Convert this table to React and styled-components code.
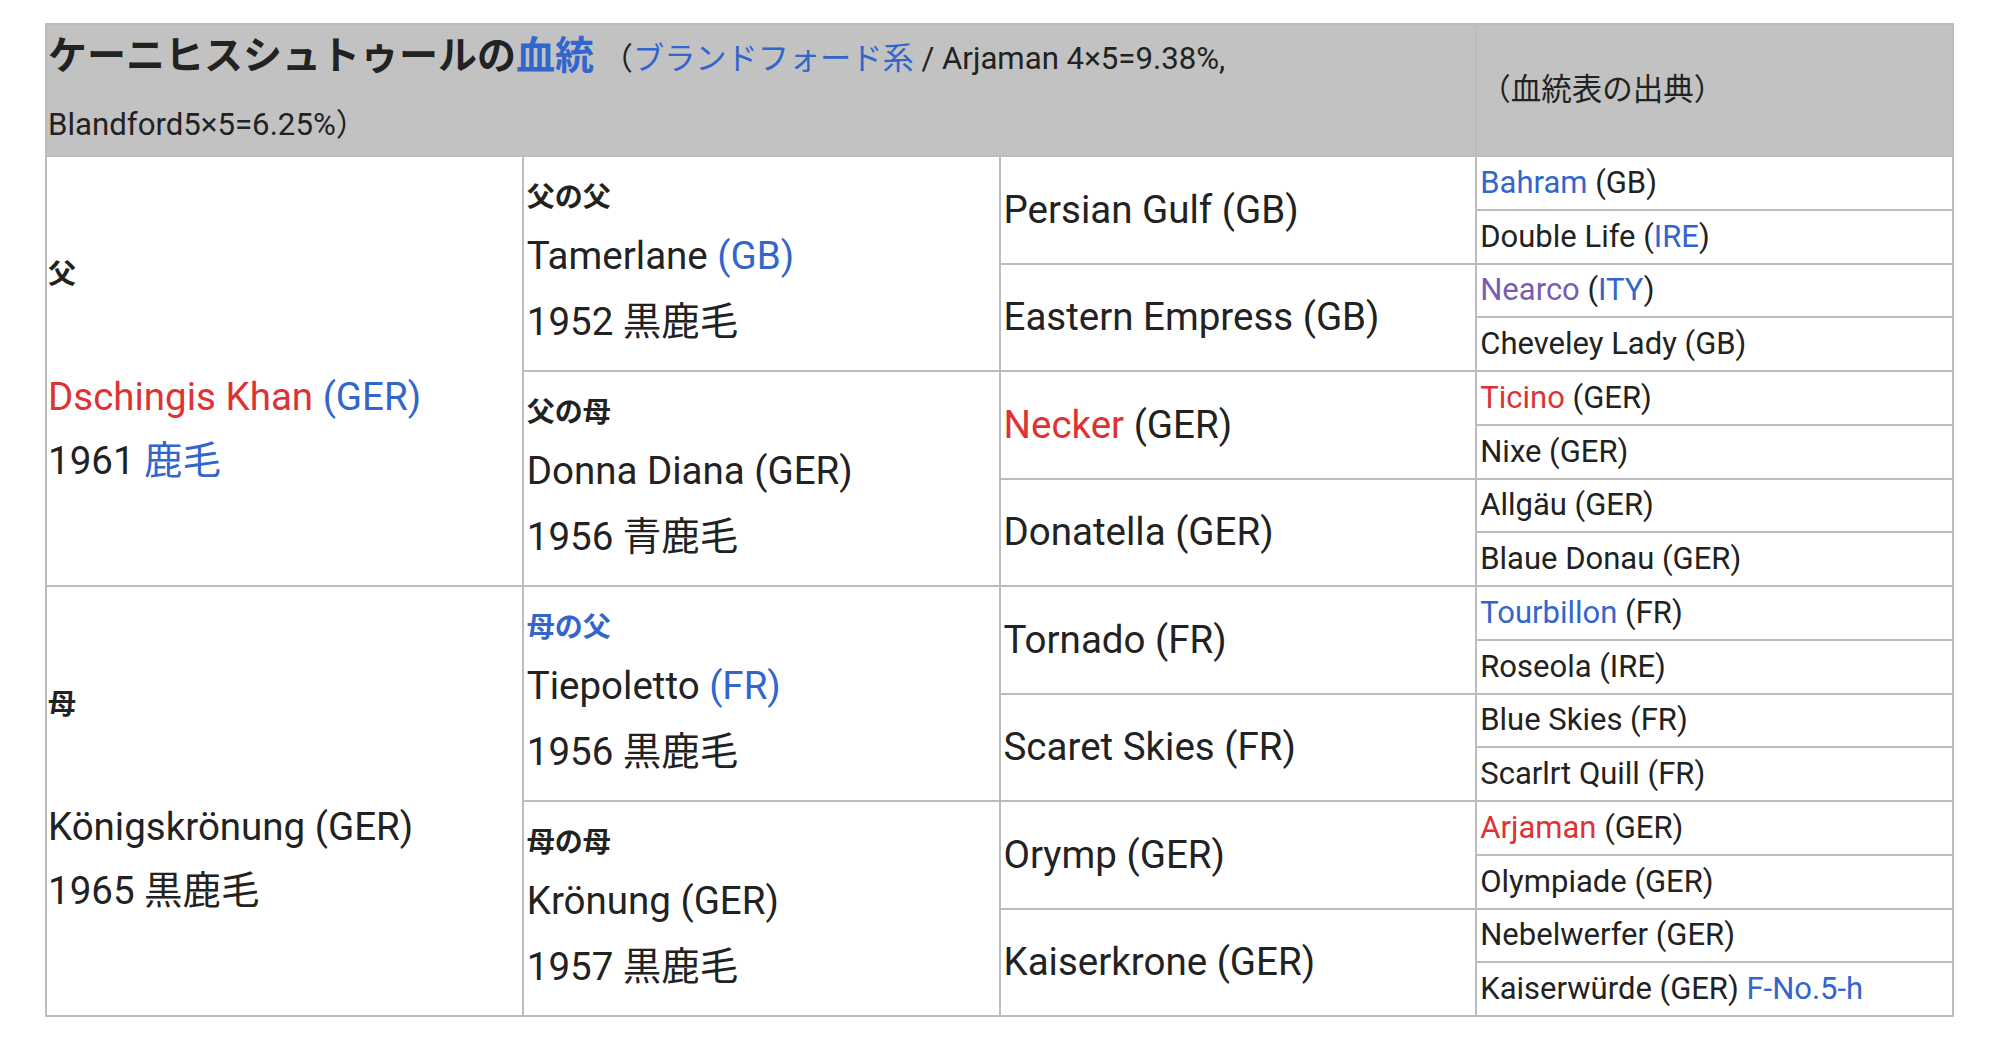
import styled, { createGlobalStyle } from "styled-components"

const GlobalStyle = createGlobalStyle`
    body {
        margin: 0;
        background: #ffffff;
        font-family: Roboto, "Noto Sans CJK JP", sans-serif;
        color: #222222;
    }
`

const Page = styled.div`
    padding: 23px 46px 35px 45px;
`

const Pedigree = styled.div`
    display: grid;
    grid-template-columns: repeat(4, 1fr);
    grid-template-rows: 130px repeat(16, 51.75px);
    gap: 2px;
    padding: 2px;
    background: #bcbcbc;
    width: 1909px;
    box-sizing: border-box;
`

const Cell = styled.div`
    grid-column: ${p => p.$col} / span ${p => p.$span || 1};
    grid-row: span ${p => p.$rows || 1};
    background: ${p => (p.$head ? "#c2c2c2" : "#ffffff")};
    display: flex;
    flex-direction: column;
    justify-content: center;
    padding-left: ${p => p.$pad || 3}px;
    font-size: ${p => p.$size || 38.5}px;
    line-height: ${p => p.$lh || 64}px;
    white-space: nowrap;
    overflow: hidden;
`

const Title = styled.span`
    font-size: 39px;
    font-weight: 700;
`

const HeadText = styled.div`
    font-size: 31.2px;
    line-height: 66px;
`

const Label = styled.div`
    font-size: 28px;
    font-weight: 700;
    line-height: ${p => p.$lh || 52}px;
    color: ${p => (p.$link ? "#3366cc" : "#222222")};
`

const Line = styled.div`
    height: 64px;
`

const Blue = styled.span`
    color: #3366cc;
`
const Red = styled.span`
    color: #dd3333;
`
const Visited = styled.span`
    color: #795cb2;
`

function Grand({ label, link, name, year }) {
    return (
        <Cell $col={2} $rows={4} $lh={66}>
            <Label $link={link} $lh={50}>{label}</Label>
            <div>{name}</div>
            <div>{year}</div>
        </Cell>
    )
}

function Great({ children }) {
    return (
        <Cell $col={3} $rows={2}>
            <div>{children}</div>
        </Cell>
    )
}

function Gen4({ children }) {
    return (
        <Cell $col={4} $size={31} $lh={40}>
            <div>{children}</div>
        </Cell>
    )
}

export default function App() {
    return (
        <Page>
            <GlobalStyle />
            <Pedigree>
                <Cell $col={1} $span={3} $head $pad={1}>
                    <HeadText>
                        <Title>ケーニヒスシュトゥールの<Blue>血統</Blue></Title> （<Blue>ブランドフォード系</Blue> / Arjaman 4×5=9.38%,
                        <br />
                        Blandford5×5=6.25%）
                    </HeadText>
                </Cell>
                <Cell $col={4} $head $size={30.5}>
                    <div>（血統表の出典）</div>
                </Cell>

                <Cell $col={1} $rows={8} $pad={1}>
                    <Label>父</Label>
                    <Line />
                    <div><Red>Dschingis Khan</Red> <Blue>(GER)</Blue></div>
                    <div>1961 <Blue>鹿毛</Blue></div>
                </Cell>
                <Grand label="父の父" name={<>Tamerlane <Blue>(GB)</Blue></>} year="1952 黒鹿毛" />
                <Great>Persian Gulf (GB)</Great>
                <Gen4><Blue>Bahram</Blue> (GB)</Gen4>
                <Gen4>Double Life (<Blue>IRE</Blue>)</Gen4>
                <Great>Eastern Empress (GB)</Great>
                <Gen4><Visited>Nearco</Visited> (<Blue>ITY</Blue>)</Gen4>
                <Gen4>Cheveley Lady (GB)</Gen4>

                <Grand label="父の母" name="Donna Diana (GER)" year="1956 青鹿毛" />
                <Great><Red>Necker</Red> (GER)</Great>
                <Gen4><Red>Ticino</Red> (GER)</Gen4>
                <Gen4>Nixe (GER)</Gen4>
                <Great>Donatella (GER)</Great>
                <Gen4>Allgäu (GER)</Gen4>
                <Gen4>Blaue Donau (GER)</Gen4>

                <Cell $col={1} $rows={8} $pad={1}>
                    <Label>母</Label>
                    <Line />
                    <div>Königskrönung (GER)</div>
                    <div>1965 黒鹿毛</div>
                </Cell>
                <Grand label="母の父" link name={<>Tiepoletto <Blue>(FR)</Blue></>} year="1956 黒鹿毛" />
                <Great>Tornado (FR)</Great>
                <Gen4><Blue>Tourbillon</Blue> (FR)</Gen4>
                <Gen4>Roseola (IRE)</Gen4>
                <Great>Scaret Skies (FR)</Great>
                <Gen4>Blue Skies (FR)</Gen4>
                <Gen4>Scarlrt Quill (FR)</Gen4>

                <Grand label="母の母" name="Krönung (GER)" year="1957 黒鹿毛" />
                <Great>Orymp (GER)</Great>
                <Gen4><Red>Arjaman</Red> (GER)</Gen4>
                <Gen4>Olympiade (GER)</Gen4>
                <Great>Kaiserkrone (GER)</Great>
                <Gen4>Nebelwerfer (GER)</Gen4>
                <Gen4>Kaiserwürde (GER) <Blue>F-No.5-h</Blue></Gen4>
            </Pedigree>
        </Page>
    )
}
